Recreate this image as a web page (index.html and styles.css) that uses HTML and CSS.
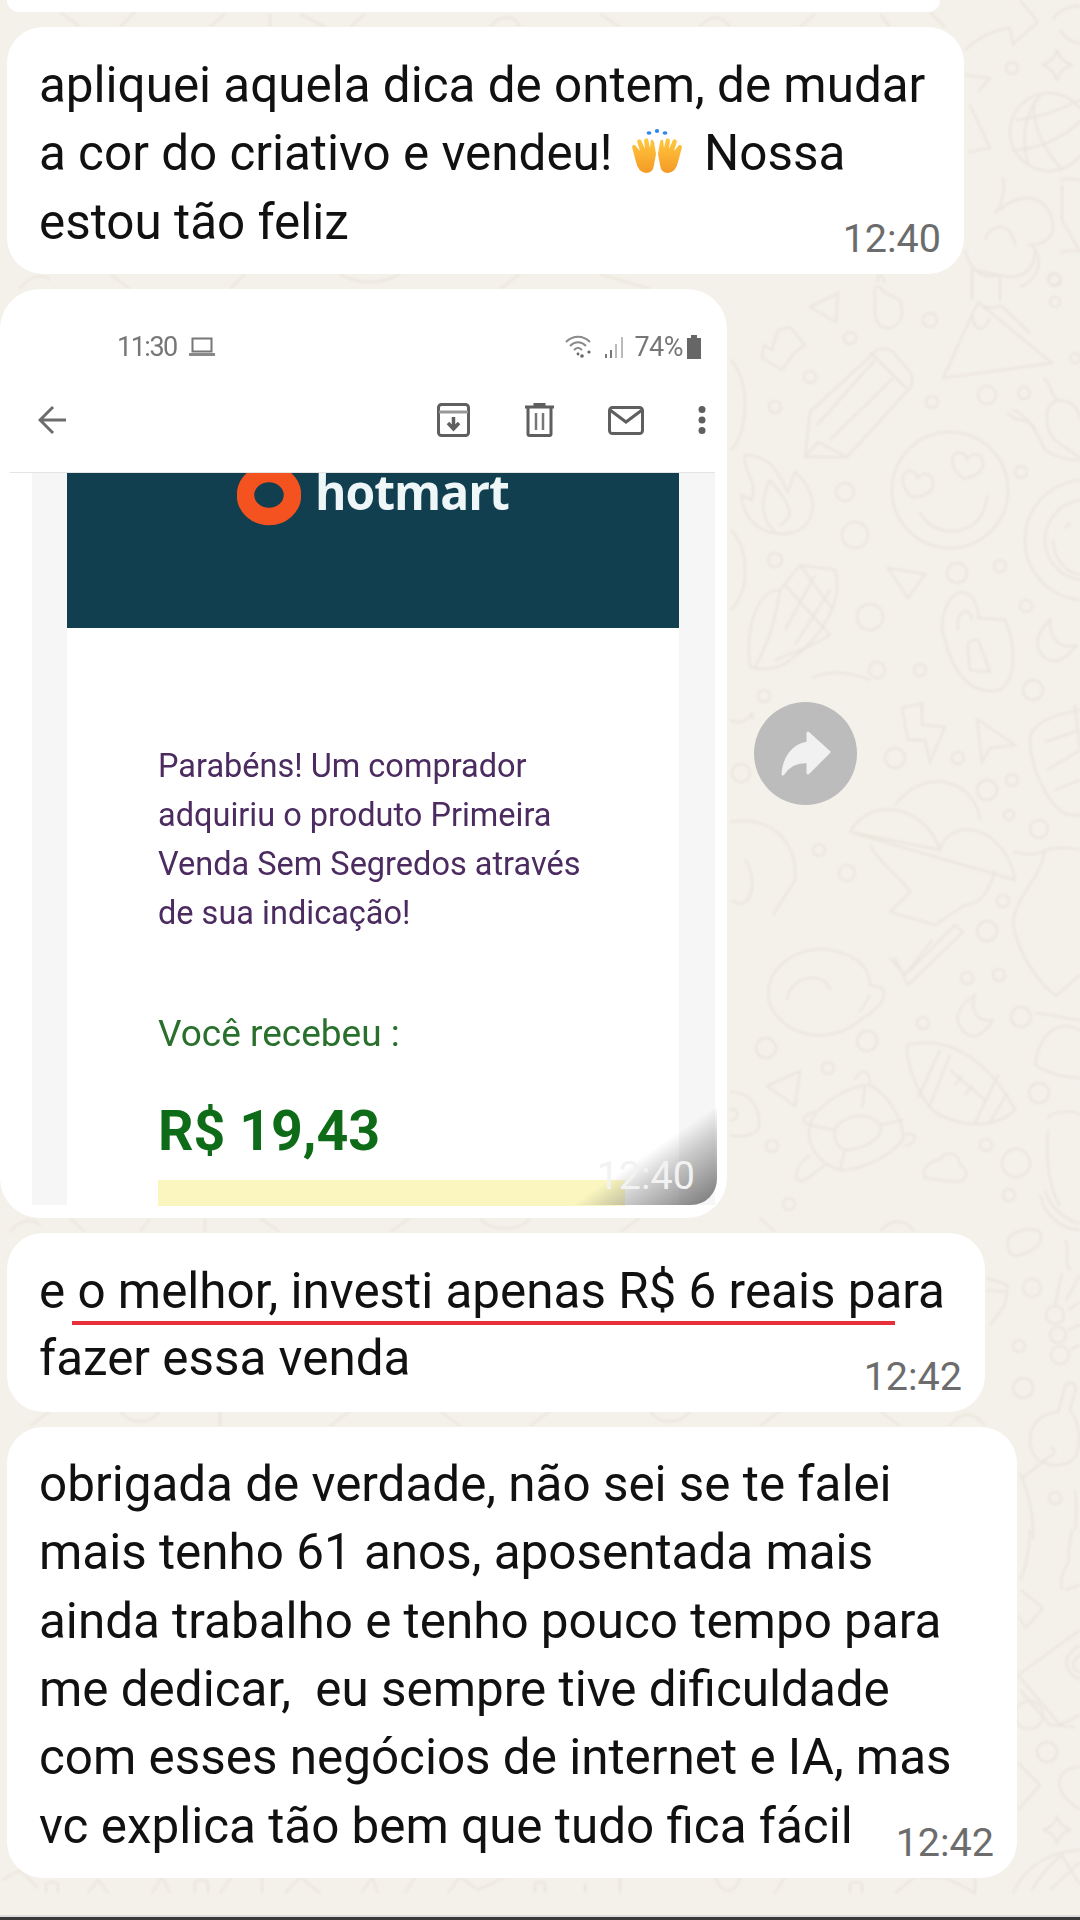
FILE: index.html
```html
<!DOCTYPE html>
<html lang="pt-BR">
<head>
    <meta charset="UTF-8">
    <meta name="viewport" content="width=device-width, initial-scale=1.0">
    <title>Conversa</title>
    <link rel="stylesheet" href="styles.css">
</head>
<body>
    <!-- Wallpaper doodles -->
    <svg class="wallpaper" viewBox="0 0 1080 1920" aria-hidden="true">
        <defs>
            <path id="heart" d="M0 15C-18 3-15-12-5-11 0-10 2-5 2-5 4-12 16-14 18-2 19 8 8 12 0 15Z"/>
            <path id="sparkle" d="M0-14C2-6 6-2 14 0 6 2 2 6 0 14-2 6-6 2-14 0-6-2-2-6 0-14Z"/>
        </defs>
        <!-- top right -->
        <path d="M965 50C985 30 1010 28 1010 28L1013 44 1038 22 1020 0M1053 20C1058 8 1075 5 1080 7M1060 30C1066 40 1075 43 1080 43"/>
        <use href="#sparkle" transform="translate(1057 65) scale(1.1)"/>
        <circle cx="1049" cy="132" r="39"/>
        <path d="M1029 166C1020 140 1025 112 1040 96M1062 170C1045 150 1030 125 1035 100M1012 150C1040 150 1070 135 1085 115M1016 120C1040 118 1060 110 1080 100"/>
        <path d="M965 75L990 78 978 92M970 105L990 148 968 152"/>
        <path d="M1003 177C1006 195 1000 208 995 213M985 240C990 222 1012 222 1015 245M1000 210C1020 190 1050 195 1053 225 1054 240 1040 245 1030 245 1045 255 1040 280 1020 287M1060 253C1068 248 1080 252 1080 252M1060 180C1070 178 1080 180 1080 180M1062 185L1062 220 1080 252"/>
        <circle cx="1054" cy="279" r="6"/>
        <!-- volcano and friends -->
        <path d="M943 378L978 302 1052 363ZM978 302C990 315 1000 300 1006 310L1030 333M972 315C975 335 985 330 990 318M972 300L972 270 1000 275 1000 302M965 250C970 272 985 280 1000 275 1015 280 1035 275 1035 250"/>
        <path d="M875 296C872 284 880 285 884 292L900 300C905 315 900 325 890 328 878 330 873 320 875 296ZM878 282C875 272 885 275 884 283"/>
        <path d="M810 307L838 293 836 322Z"/>
        <path d="M764 345L772 350 778 330 790 327 805 345 795 352 782 370 762 358Z"/>
        <path d="M805 457L810 412 877 350Q886 346 893 352L910 372Q916 382 908 390L847 457ZM817 425L875 360M830 440L893 378M870 352L906 388M805 457L818 442 847 457"/>
        <circle cx="950" cy="490" r="58"/>
        <use href="#heart" transform="translate(915 483) rotate(10)"/>
        <use href="#heart" transform="translate(965 464) rotate(5)"/>
        <path d="M920 512C932 540 985 540 987 495"/>
        <circle cx="1085" cy="540" r="60"/>
        <circle cx="1085" cy="540" r="40"/>
        <path d="M1053 540C1055 565 1070 575 1085 575M1065 528L1070 523"/>
        <path d="M745 455C775 455 780 480 788 492L795 472C815 490 820 515 800 530 775 540 745 530 741 495L752 500C758 480 742 470 745 455ZM770 480C760 500 760 522 778 534M770 480C785 500 800 515 780 525"/>
        <path d="M1012 410C1025 412 1036 430 1045 450 1060 460 1075 460 1080 460M1007 412C1015 425 1030 415 1035 430M1044 378C1052 385 1050 395 1058 400 1042 405 1045 430 1055 440L1080 458M1058 400C1072 400 1080 410 1080 420"/>
        <path d="M731 360C750 380 750 430 731 450M731 530C750 550 750 590 731 610"/>
        <path d="M750 667C745 620 760 590 780 590L800 565 835 570C845 600 820 640 790 660 780 670 760 670 750 667ZM780 590C775 620 770 640 755 667M800 565L833 610M785 585L830 635M815 575L785 630M830 590L795 645M775 660C800 650 815 645 830 635"/>
        <path d="M888 568L925 574 908 598Z"/>
        <path d="M945 640C938 625 945 595 962 592 975 592 980 615 978 618L1005 620C1018 650 1015 680 1000 690 975 695 955 680 945 640ZM958 630C955 610 970 605 972 620M968 650C965 640 980 635 980 645L990 672 970 670Z"/>
        <path d="M1050 620C1040 630 1030 645 1045 658 1060 668 1072 650 1077 645 1060 650 1050 640 1050 620Z"/>
        <path d="M812 678C825 672 845 670 870 680M730 720C750 730 755 700 752 720"/>
        <path d="M902 708L922 703 922 725 945 727 930 762 925 740 908 740Z"/>
        <path d="M977 719L1015 745 990 748 982 762Z"/>
        <path d="M1080 710C1050 715 1030 725 1030 740 1030 765 1048 810 1070 815L1080 815M1045 742L1080 730M1047 770L1080 750M1055 790L1080 780M1075 705L1080 750"/>
        <path d="M850 832C870 795 925 805 940 850M895 805C925 765 975 780 980 820M940 850C950 815 1005 825 1015 880L850 832ZM870 845C880 865 900 875 910 892L890 912 935 925 965 905C980 905 990 890 995 870"/>
        <path d="M730 822C780 815 797 850 795 880L773 915M732 900C750 915 760 880 745 860"/>
        <path d="M890 958L905 975 932 940M895 958L908 985 963 932 955 925 908 972"/>
        <path d="M975 995C960 1005 948 1020 968 1035 980 1040 990 1025 993 1020 975 1022 970 1010 975 995Z"/>
        <path d="M768 995C768 965 800 945 830 950 860 955 870 970 870 985L882 988C890 1000 870 1015 860 1020 840 1040 790 1045 770 1005Z"/>
        <path d="M787 1000C790 975 825 970 830 990M870 995L860 1012"/>
        <path d="M907 1045C945 1035 985 1055 1015 1110 1000 1125 970 1130 940 1115 920 1105 905 1060 907 1045ZM918 1098L940 1050M930 1105L950 1055M975 1123L998 1075M990 1122L1008 1092M950 1070L985 1100M955 1085L963 1075M965 1095L972 1085"/>
        <path d="M767 1086L800 1071 795 1106Z"/>
        <path d="M730 1092C755 1092 762 1115 758 1130 745 1140 730 1135 730 1135M730 1110C740 1105 740 1122 730 1120"/>
        <path d="M810 1125C815 1105 850 1085 870 1085 890 1095 905 1125 903 1140 890 1155 865 1170 840 1170 820 1165 805 1145 810 1125ZM835 1130C840 1115 870 1110 880 1125 885 1140 860 1150 845 1150 838 1148 833 1140 835 1130ZM865 1085L862 1108M880 1125L903 1120M845 1150L840 1170M810 1125L835 1130M855 1080C860 1068 870 1068 870 1085"/>
        <path d="M810 1125C800 1122 802 1115 815 1112M905 1135C918 1130 918 1145 905 1145M810 1155C790 1170 795 1185 805 1180L825 1165"/>
        <path d="M925 1178C920 1165 935 1160 940 1160 945 1150 960 1152 960 1165 970 1170 968 1182 955 1182Z"/>
        <path d="M1047 1118C1055 1110 1075 1110 1080 1115M1048 1130C1045 1160 1050 1190 1060 1206M1045 1190C1050 1210 1070 1222 1080 1223M1040 1195C1045 1218 1065 1230 1080 1230"/>
        <path d="M1035 1013C1055 1015 1075 1020 1080 1020M1035 1065C1040 1030 1060 1020 1080 1030M1035 1065C1050 1075 1070 1078 1080 1078"/>
        <path d="M1013 852C1025 855 1040 855 1045 850 1065 845 1080 850 1080 850M1045 850C1040 880 1020 890 1013 920 1015 950 1040 985 1056 996L1080 975"/>
        <!-- lower right column -->
        <path d="M1008 1240C1010 1232 1030 1226 1040 1232 1044 1245 1035 1250 1020 1255 1010 1258 1007 1250 1008 1240Z"/>
        <path d="M987 1278L1008 1285 1005 1305 990 1325M987 1290L1008 1292"/>
        <circle cx="1055" cy="1315" r="9"/><circle cx="1058" cy="1335" r="8"/><circle cx="1060" cy="1355" r="9"/>
        <path d="M1080 1302L1068 1310M1080 1325L1068 1330M1080 1345L1070 1350M1062 1273L1055 1305M1080 1275L1066 1300M1065 1240C1072 1250 1062 1260 1070 1270"/>
        <path d="M1066 1384C1075 1380 1078 1388 1074 1395L1070 1410C1082 1425 1082 1455 1070 1462 1050 1470 1030 1462 1030 1440 1030 1422 1045 1412 1058 1412ZM1050 1448C1056 1448 1056 1456 1050 1456L1020 1480M1020 1473C1028 1490 1035 1520 1033 1540M1075 1490C1078 1510 1075 1530 1075 1530"/>
        <path d="M1062 1590C1058 1570 1072 1565 1068 1555L1072 1530M1080 1585L1065 1590"/>
        <path d="M1021 1590L1043 1608 1026 1628 1018 1615M1030 1530C1030 1550 1025 1570 1020 1580"/>
        <path d="M1018 1675L1080 1630M1018 1675L1060 1725 1080 1715M1020 1690L1050 1725 1075 1727M1080 1645C1062 1655 1062 1670 1080 1680M1080 1655C1070 1662 1072 1670 1080 1672"/>
        <circle cx="1029" cy="1715" r="14"/>
        <path d="M1080 1767C1055 1768 1050 1790 1080 1810M1018 1763L1040 1785 1018 1810"/>
        <use href="#sparkle" transform="translate(1057 1830)"/>
        <path d="M1013 1893C1025 1865 1050 1852 1080 1850M1032 1890C1040 1875 1055 1860 1062 1855 1070 1870 1078 1880 1080 1885M1050 1890L1080 1862"/>
        <!-- small dots -->
        <g>
            <circle cx="1012" cy="68" r="6"/><circle cx="1055" cy="280" r="6"/>
            <circle cx="930" cy="320" r="7"/><circle cx="850" cy="338" r="6"/><circle cx="810" cy="377" r="6"/>
            <circle cx="775" cy="407" r="6"/><circle cx="932" cy="402" r="6"/><circle cx="987" cy="395" r="9"/>
            <circle cx="1024" cy="393" r="6"/><circle cx="1075" cy="358" r="5"/><circle cx="1055" cy="302" r="5"/>
            <circle cx="845" cy="492" r="9"/><circle cx="855" cy="535" r="13"/><circle cx="775" cy="560" r="7"/>
            <circle cx="1021" cy="472" r="6"/><circle cx="957" cy="573" r="10"/><circle cx="1000" cy="566" r="6"/>
            <circle cx="870" cy="617" r="13"/><circle cx="877" cy="670" r="8"/><circle cx="920" cy="670" r="6"/>
            <circle cx="1026" cy="606" r="6"/><circle cx="1033" cy="690" r="10"/>
            <circle cx="895" cy="758" r="10"/><circle cx="958" cy="758" r="6"/><circle cx="987" cy="790" r="10"/>
            <circle cx="1012" cy="780" r="6"/><circle cx="1009" cy="815" r="5"/><circle cx="1039" cy="829" r="9"/>
            <circle cx="741" cy="773" r="9"/><circle cx="764" cy="696" r="6"/><circle cx="819" cy="850" r="6"/>
            <circle cx="847" cy="873" r="8"/><circle cx="1003" cy="901" r="6"/><circle cx="987" cy="931" r="10"/>
            <circle cx="967" cy="978" r="6"/><circle cx="999" cy="975" r="6"/><circle cx="1021" cy="1017" r="10"/>
            <circle cx="923" cy="1023" r="6"/><circle cx="867" cy="1041" r="10"/><circle cx="766" cy="1048" r="10"/>
            <circle cx="828" cy="1068" r="6"/><circle cx="1039" cy="1093" r="10"/><circle cx="986" cy="1145" r="6"/>
            <circle cx="1016" cy="1163" r="14"/><circle cx="772" cy="1146" r="6"/><circle cx="1009" cy="1195" r="6"/>
            <circle cx="789" cy="1204" r="6"/><circle cx="1032" cy="1288" r="9"/><circle cx="1019" cy="1346" r="6"/>
            <circle cx="1023" cy="1388" r="10"/><circle cx="1055" cy="1498" r="6"/><circle cx="1047" cy="1752" r="10"/>
        </g>
        <!-- bits showing between bubbles -->
        <path d="M60 12L80 27M120 27L135 12M210 27L225 14M270 27V14M300 14L325 27M350 27L365 14M490 27C500 14 515 14 520 27M600 14L620 27M700 27C710 14 720 14 730 27M800 27L815 14M880 14L890 27M930 12L945 27"/>
        <path d="M20 289C30 274 45 274 50 280M110 274L130 289M230 289L245 274M340 274C360 285 380 285 400 274M500 289L520 274M600 274L650 289"/>
        <path d="M10 1232C20 1218 35 1218 40 1226M70 1218L85 1232M140 1232L150 1218M205 1232V1218M260 1218L280 1232M390 1232L410 1218M480 1218C490 1232 520 1232 530 1218M620 1232L640 1218M760 1218L775 1232M880 1232C890 1218 905 1218 915 1232"/>
        <path d="M30 1426L50 1411M120 1411C130 1425 150 1425 160 1411M220 1411V1426M330 1426L350 1411M440 1411L460 1426M530 1426L550 1411M650 1411C660 1425 680 1425 690 1411M760 1426L780 1411M880 1411L900 1426M950 1426C960 1411 975 1411 985 1426"/>
        <path d="M2 1880L20 1870 38 1888M46 1893V1884Q52 1880 58 1884V1893M88 1893L98 1880 108 1893M152 1893L162 1877 170 1893M195 1893V1882Q202 1878 208 1882V1893M220 1893L232 1877M262 1893V1877M285 1893L300 1877 320 1893M362 1893L372 1877 378 1893M405 1893L415 1877M448 1893L460 1877 478 1890 505 1877M535 1893V1884Q540 1880 545 1884V1893M585 1893V1883M620 1893V1877M715 1877C722 1895 735 1895 740 1877M775 1893L785 1877M850 1893V1884Q856 1880 862 1884V1893M895 1893L915 1877 945 1877 975 1893V1877"/>
    </svg>

    <div class="chat">
        <div class="bubble bubble-cut"></div>

        <div class="bubble msg-first">
            <p>apliquei aquela dica de ontem, de mudar<br>a cor do criativo e vendeu!
                <svg class="emoji" viewBox="0 0 54 44" aria-label="mãos para o alto">
                    <defs>
                        <linearGradient id="handFill" x1="0" y1="0" x2="0" y2="1">
                            <stop offset="0" stop-color="#ffc83d"/>
                            <stop offset="1" stop-color="#f59a26"/>
                        </linearGradient>
                    </defs>
                    <ellipse cx="19" cy="4" rx="2.4" ry="1.8" fill="#2f86ee"/>
                    <ellipse cx="27" cy="2" rx="2.2" ry="2" fill="#2f86ee"/>
                    <ellipse cx="35" cy="4" rx="2.4" ry="1.8" fill="#2f86ee"/>
                    <path id="leftHand" fill="url(#handFill)" d="M26 25L24 13Q23 10 21 11L20 19 18 10Q16 8 14 11L15 20 11 11Q9 9 7 12L10 22 5 16Q3 15 2 18L6 33Q8 43 16 44 23 44 24 36Z"/>
                    <use href="#leftHand" transform="matrix(-1 0 0 1 54 0)"/>
                </svg>
                Nossa<br>estou tão feliz</p>
            <span class="msg-time">12:40</span>
        </div>

        <div class="photo-row">
            <div class="bubble photo">
                <div class="phone-status">
                    <div class="status-side">
                        <span>11:30</span>
                        <svg class="ico-laptop" viewBox="0 0 26 20">
                            <path d="M3.5 1.5h19v13h-19z" fill="none" stroke="#777" stroke-width="2"/>
                            <path d="M0 16h26v3H0z" fill="#888"/>
                        </svg>
                    </div>
                    <div class="status-side">
                        <svg class="ico-wifi" viewBox="0 0 28 24" fill="none" stroke="#8a8a8a" stroke-width="2">
                            <path d="M1 7C8 0 18 0 25 7M5 11C10 6 16 6 21 11M9 15C12 12 14 12 17 15"/>
                            <circle cx="17" cy="21" r="1.8" fill="#666" stroke="none"/>
                            <circle cx="24" cy="17" r="1.6" fill="#666" stroke="none"/>
                            <circle cx="13" cy="19" r="1.4" fill="#666" stroke="none"/>
                        </svg>
                        <svg class="ico-signal" viewBox="0 0 20 24" stroke-width="2">
                            <path d="M2 23v-4M7 23v-8" stroke="#777"/>
                            <path d="M12 23V9M18 23V2" stroke="#bbb"/>
                        </svg>
                        <span class="status-pct">74%</span>
                        <svg class="ico-battery" viewBox="0 0 14 24">
                            <path d="M4 0h6v3h4v21H0V3h4z" fill="#666"/>
                        </svg>
                    </div>
                </div>
                <div class="mail-bar">
                    <svg class="ico-back" viewBox="0 0 28 30" fill="none" stroke="#6c6c6c" stroke-width="3">
                        <path d="M28 15H3M15 2L2 15l13 13"/>
                    </svg>
                    <div class="mail-actions">
                        <svg class="ico-archive" viewBox="0 0 33 34" fill="none" stroke="#5f5f5f" stroke-width="3">
                            <rect x="1.5" y="1.5" width="30" height="31" rx="3"/>
                            <path d="M2 9h29" stroke="#999"/>
                            <path d="M16.5 14v11M11 20l5.500 6 5.500-6" stroke-width="3.500"/>
                        </svg>
                        <svg class="ico-trash" viewBox="0 0 29 34" fill="none" stroke="#5f5f5f" stroke-width="3">
                            <path d="M0 4h29M10 3V1h9v2M3 5v26q0 1.500 1.500 1.500h20q1.500 0 1.500-1.500V5"/>
                            <path d="M11 10v17M18 10v17" stroke="#777" stroke-width="2.500"/>
                        </svg>
                        <svg class="ico-mail" viewBox="0 0 36 29" fill="none" stroke="#5f5f5f" stroke-width="3">
                            <rect x="1.500" y="1.500" width="33" height="26" rx="3"/>
                            <path d="M2 4l16 12L34 4"/>
                        </svg>
                        <svg class="ico-dots" viewBox="0 0 10 28" fill="#5f5f5f">
                            <circle cx="5" cy="3.500" r="3.500"/>
                            <circle cx="5" cy="14" r="3.500"/>
                            <circle cx="5" cy="24.500" r="3.500"/>
                        </svg>
                    </div>
                </div>
                <div class="mail-body">
                    <div class="mail-sheet">
                        <div class="mail-head">
                            <svg class="hotmart-ring" viewBox="0 0 64 53">
                                <ellipse cx="32" cy="22" rx="23.500" ry="21.500" fill="none" stroke="#f4531f" stroke-width="17.500"/>
                            </svg>
                            <span class="hotmart-word">hotmart</span>
                        </div>
                        <p class="mail-text">Parabéns! Um comprador<br>adquiriu o produto Primeira<br>Venda Sem Segredos através<br>de sua indicação!</p>
                        <p class="mail-label">Você recebeu :</p>
                        <p class="mail-value">R$ 19,43</p>
                        <div class="mail-highlight"></div>
                    </div>
                </div>
                <div class="photo-shade"></div>
                <span class="photo-time">12:40</span>
            </div>
            <div class="forward-btn">
                <svg viewBox="0 0 50 46">
                    <path fill="#f1f1f2" stroke="#f1f1f2" stroke-width="3" stroke-linejoin="round" d="M27 2L48 21 27 42V31C15 30 7 35 2 43 3 27 12 14 27 12Z"/>
                </svg>
            </div>
        </div>

        <div class="bubble msg-second">
            <p>e o melhor, investi apenas R$ 6 reais para<br>fazer essa venda</p>
            <span class="scribble"></span>
            <span class="msg-time">12:42</span>
        </div>

        <div class="bubble msg-third">
            <p>obrigada de verdade, não sei se te falei<br>mais tenho 61 anos, aposentada mais<br>ainda trabalho e tenho pouco tempo para<br>me dedicar,&nbsp; eu sempre tive dificuldade<br>com esses negócios de internet e IA, mas<br>vc explica tão bem que tudo fica fácil</p>
            <span class="msg-time">12:42</span>
        </div>
    </div>

    <div class="composer-edge"></div>
</body>
</html>
```

FILE: styles.css
```css
* {
    margin: 0;
    padding: 0;
    box-sizing: border-box;
}

body {
    position: relative;
    width: 1080px;
    height: 1920px;
    overflow: hidden;
    display: flex;
    flex-direction: column;
    background-color: #f4f1eb;
    font-family: Roboto, "Liberation Sans", sans-serif;
}

.wallpaper {
    position: absolute;
    top: 0;
    left: 0;
    width: 1080px;
    height: 1920px;
    fill: none;
    stroke: #ebe5db;
    stroke-width: 2;
    filter: blur(0.8px);
}

.chat {
    position: relative;
    display: flex;
    flex-direction: column;
    align-items: flex-start;
    gap: 15px;
}

.bubble {
    position: relative;
    margin-left: 7px;
    background-color: #fff;
    border-radius: 36px;
    color: #111;
    font-size: 49.4px;
    line-height: 68.4px;
}

.bubble p {
    filter: blur(0.3px);
}

.bubble-cut {
    width: 933px;
    height: 12px;
    border-radius: 0 0 28px 28px;
}

.msg-first {
    width: 957px;
    padding: 24px 32px 18px;
}

.msg-second {
    width: 978px;
    padding: 25px 32px 19.5px;
    line-height: 67px;
}

.msg-third {
    width: 1010px;
    padding: 23px 32px 18px;
}

.emoji {
    width: 54px;
    height: 44px;
    margin: 0 8px -3px 5px;
}

.msg-time {
    position: absolute;
    right: 23px;
    bottom: 17px;
    color: #6c6c6c;
    font-size: 39.5px;
    line-height: 36px;
}

.scribble {
    position: absolute;
    left: 65px;
    top: 88px;
    width: 823px;
    height: 4px;
    background-color: #e8303a;
}

/* forwarded screenshot */
.photo-row {
    display: flex;
    align-items: center;
    gap: 27px;
}

.photo {
    width: 727px;
    height: 929px;
    margin-left: 0;
    padding-top: 41px;
    border-radius: 40px;
    overflow: hidden;
    font-size: 26px;
    line-height: 34px;
}

.phone-status {
    display: flex;
    justify-content: space-between;
    height: 34px;
    padding: 0 26px 0 117px;
    color: #777;
    filter: blur(0.5px);
}

.status-side {
    display: flex;
    align-items: center;
    gap: 9px;
    font-size: 27px;
    letter-spacing: -1.5px;
}

.status-pct {
    letter-spacing: -0.5px;
    margin: 0 -5px 0 1px;
}

.ico-laptop { width: 26px; height: 20px; margin-left: 3px; }
.ico-wifi { width: 32px; height: 24px; }
.ico-signal { width: 20px; height: 24px; }
.ico-battery { width: 14px; height: 24px; }

.mail-bar {
    display: flex;
    justify-content: space-between;
    align-items: center;
    height: 34px;
    margin-top: 39px;
    padding: 0 20px 0 38px;
    filter: blur(0.5px);
}

.mail-actions {
    display: flex;
    align-items: center;
}

.ico-back { width: 28px; height: 30px; }
.ico-archive { width: 33px; height: 34px; }
.ico-trash { width: 29px; height: 34px; margin-left: 55px; }
.ico-mail { width: 36px; height: 29px; margin-left: 54px; }
.ico-dots { width: 10px; height: 28px; margin-left: 53px; }

.mail-body {
    width: 705px;
    height: 733px;
    margin: 35px 0 0 10px;
    padding: 0 36px 0 22px;
    background: linear-gradient(90deg, #fff 22px, #f6f6f6 22px);
    border-top: 1px solid #e4e4e4;
    filter: blur(0.5px);
}

.mail-sheet {
    width: 612px;
    height: 100%;
    margin-left: 35px;
    background-color: #fff;
    color: #4b2b60;
}

.mail-head {
    display: flex;
    align-items: flex-start;
    gap: 14px;
    height: 155px;
    padding-left: 170px;
    background-color: #113f4f;
}

.hotmart-ring {
    width: 64px;
    height: 53px;
    flex-shrink: 0;
}

.hotmart-word {
    color: #eef6f7;
    font-family: "Open Sans", sans-serif;
    font-weight: 700;
    font-size: 48px;
    line-height: 38px;
    letter-spacing: -1px;
}

.mail-text {
    margin-top: 114px;
    padding-left: 91px;
    font-size: 32.5px;
    line-height: 49px;
}

.mail-label {
    margin-top: 71px;
    padding-left: 91px;
    color: #2a702d;
    font-size: 37px;
    line-height: 49px;
}

.mail-value {
    margin-top: 44px;
    padding-left: 91px;
    color: #0e6b17;
    font-size: 55.5px;
    font-weight: 700;
    line-height: 60px;
}

.mail-highlight {
    width: 467px;
    height: 26px;
    margin: 18px 0 0 91px;
    background-color: #fbf6bf;
}

.photo-shade {
    position: absolute;
    right: 10px;
    bottom: 13px;
    width: 145px;
    height: 100px;
    border-radius: 0 0 26px 0;
    background: linear-gradient(to bottom right, rgba(110, 110, 110, 0) 50%, rgba(110, 110, 110, 0.3) 64%, rgba(110, 110, 110, 0.95) 100%);
}

.photo-time {
    position: absolute;
    right: 32px;
    bottom: 24px;
    color: #f2f2f2;
    font-size: 39.5px;
    line-height: 36px;
}

.forward-btn {
    display: flex;
    align-items: center;
    justify-content: center;
    width: 103px;
    height: 103px;
    border-radius: 50%;
    background-color: #bcbcbc;
}

.forward-btn svg {
    width: 50px;
    height: 46px;
}

.composer-edge {
    position: relative;
    margin-top: auto;
    height: 5px;
    background: linear-gradient(#dcdcdc 2px, #3a3a3a 2px);
}
```
